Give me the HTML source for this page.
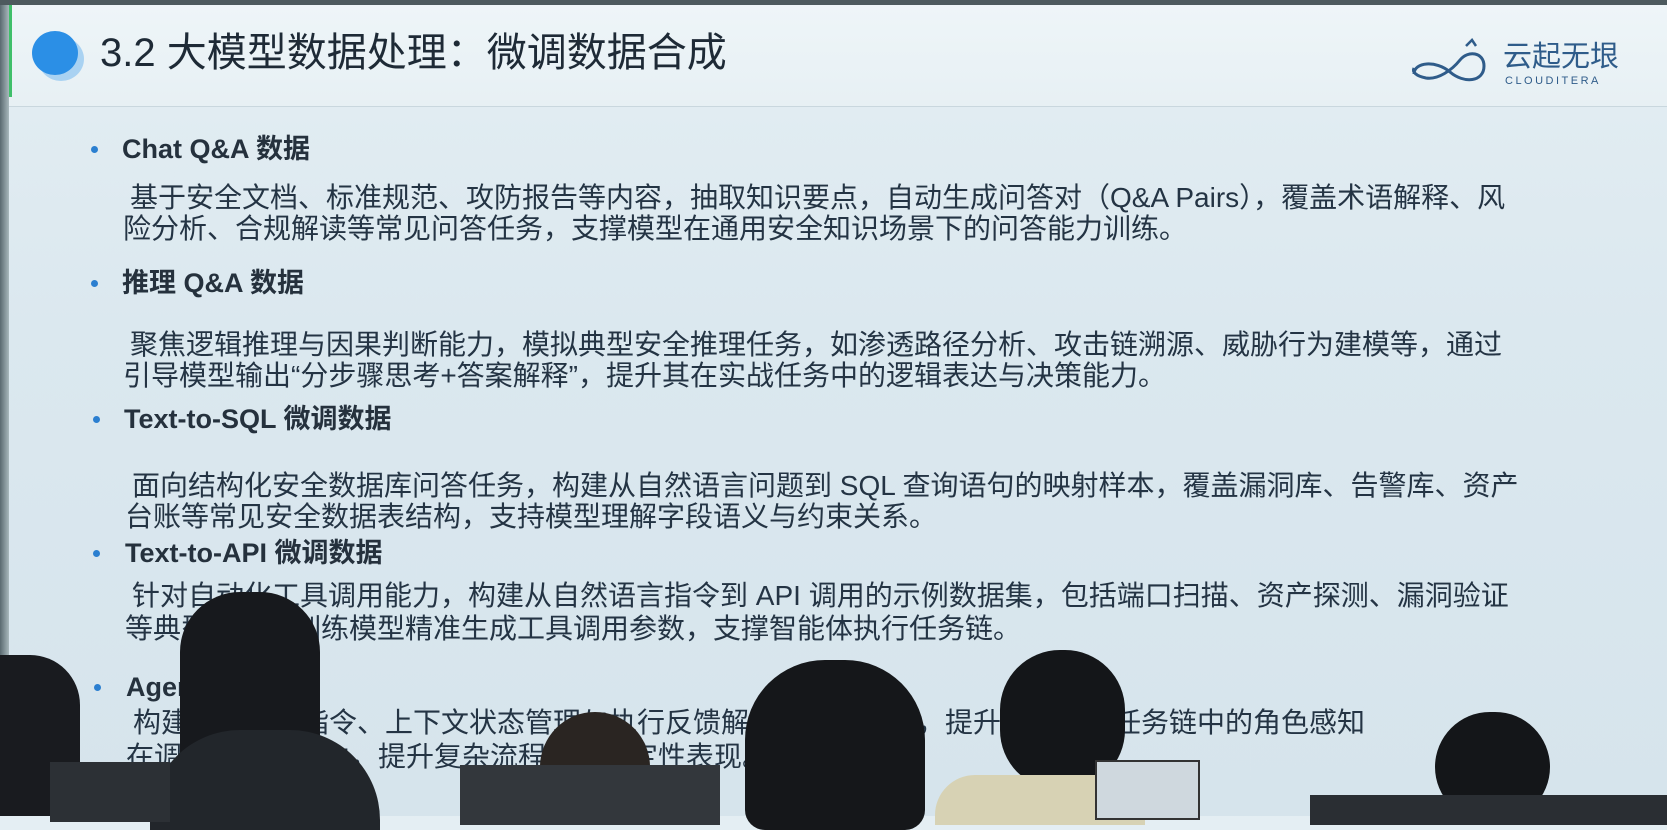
<!DOCTYPE html>
<html><head><meta charset="utf-8"><style>
*{margin:0;padding:0;box-sizing:border-box}
body{width:1667px;height:816px;overflow:hidden;position:relative;
background:linear-gradient(180deg,#e4eef3 0%,#dbe8ef 40%,#d6e4ec 100%);
font-family:"Liberation Sans","Noto Sans CJK SC",sans-serif;color:#243444}
.edge{position:absolute;left:0;top:0;width:9px;height:816px;background:linear-gradient(90deg,#5a6a70,#a8b8bc)}
.topb{position:absolute;left:0;top:0;width:1667px;height:5px;background:#4d5a5e}
.grn{position:absolute;left:9px;top:5px;width:3px;height:92px;background:#3fbf6a}
.head{position:absolute;left:9px;top:5px;width:1658px;height:102px;background:linear-gradient(180deg,#eef5f8,#e7f0f4);border-bottom:1px solid #c9d7de}
.dot{position:absolute;left:32px;top:31px;width:46px;height:44px;border-radius:50%;background:#2b8fe6;box-shadow:6px 6px 0 #a9d2f2}
.title{position:absolute;left:100px;top:30px;font-size:40px;line-height:46px;color:#1e2a36;white-space:nowrap}
.logo{position:absolute;left:1408px;top:32px}
.l{position:absolute;white-space:nowrap;font-size:28px;line-height:30px}
.h{font-size:27px;font-weight:bold;color:#25313d}
.b{position:absolute;width:7px;height:7px;border-radius:50%;background:#2b7fd0}
.p{position:absolute;background:#1c1f24}
</style></head><body>
<div class="head"></div>
<div class="edge"></div><div class="topb"></div><div class="grn"></div>
<div class="dot"></div>
<div class="title">3.2 大模型数据处理：微调数据合成</div>
<svg class="logo" width="215" height="60" viewBox="0 0 215 60">
<path d="M6 42 C6 30 28 28 42 40 C56 52 76 50 76 34 C76 20 60 18 52 28 C44 38 30 48 18 46 C8 44 4 40 6 36" fill="none" stroke="#2f5c8a" stroke-width="3"/>
<path d="M58 14 l6 -6 l4 6" fill="none" stroke="#2f5c8a" stroke-width="2.5"/>
<text x="95" y="34" font-size="29" fill="#2f5c8a" font-family="Noto Sans CJK SC,sans-serif">云起无垠</text>
<text x="97" y="52" font-size="11" fill="#2f5c8a" letter-spacing="2.5" font-family="Liberation Sans,sans-serif">CLOUDITERA</text>
</svg>

<div class="b" style="left:91px;top:146px"></div>
<div class="l h" style="left:122px;top:134px">Chat Q&amp;A 数据</div>
<div class="l" style="left:130px;top:183px">基于安全文档、标准规范、攻防报告等内容，抽取知识要点，自动生成问答对（Q&amp;A Pairs），覆盖术语解释、风</div>
<div class="l" style="left:123px;top:214px">险分析、合规解读等常见问答任务，支撑模型在通用安全知识场景下的问答能力训练。</div>

<div class="b" style="left:91px;top:280px"></div>
<div class="l h" style="left:122px;top:268px">推理 Q&amp;A 数据</div>
<div class="l" style="left:130px;top:330px">聚焦逻辑推理与因果判断能力，模拟典型安全推理任务，如渗透路径分析、攻击链溯源、威胁行为建模等，通过</div>
<div class="l" style="left:123px;top:361px">引导模型输出“分步骤思考+答案解释”，提升其在实战任务中的逻辑表达与决策能力。</div>

<div class="b" style="left:93px;top:416px"></div>
<div class="l h" style="left:124px;top:404px">Text-to-SQL 微调数据</div>
<div class="l" style="left:132px;top:471px">面向结构化安全数据库问答任务，构建从自然语言问题到 SQL 查询语句的映射样本，覆盖漏洞库、告警库、资产</div>
<div class="l" style="left:125px;top:502px">台账等常见安全数据表结构，支持模型理解字段语义与约束关系。</div>

<div class="b" style="left:93px;top:550px"></div>
<div class="l h" style="left:125px;top:538px">Text-to-API 微调数据</div>
<div class="l" style="left:132px;top:581px">针对自动化工具调用能力，构建从自然语言指令到 API 调用的示例数据集，包括端口扫描、资产探测、漏洞验证</div>
<div class="l" style="left:125px;top:614px">等典型场景，训练模型精准生成工具调用参数，支撑智能体执行任务链。</div>

<div class="b" style="left:94px;top:684px"></div>
<div class="l h" style="left:126px;top:672px">Agent 微调数据</div>
<div class="l" style="left:133px;top:708px">构建多步任务指令、上下文状态管理与执行反馈解析的交互样本，提升智能体在任务链中的角色感知</div>
<div class="l" style="left:126px;top:742px">在调度与协同能力，提升复杂流程中的稳定性表现。</div>

<!-- audience -->
<div class="p" style="left:180px;top:592px;width:140px;height:224px;border-radius:60px 60px 10px 10px;background:#17191d"></div>
<div class="p" style="left:150px;top:730px;width:230px;height:100px;border-radius:90px 90px 0 0;background:#22262b"></div>
<div class="p" style="left:0;top:655px;width:80px;height:161px;border-radius:0 50px 0 0;background:#191b1f"></div>
<div class="p" style="left:50px;top:762px;width:120px;height:60px;background:#2c3035"></div>
<div class="p" style="left:540px;top:712px;width:110px;height:110px;border-radius:50%;background:#2a2522"></div>
<div class="p" style="left:460px;top:765px;width:260px;height:60px;background:#33373c"></div>
<div class="p" style="left:745px;top:660px;width:180px;height:170px;border-radius:80px 80px 20px 20px;background:#15171a"></div>
<div class="p" style="left:1000px;top:650px;width:125px;height:140px;border-radius:60px;background:#141619"></div>
<div class="p" style="left:935px;top:775px;width:210px;height:50px;border-radius:40px 40px 0 0;background:#d7d2b4"></div>
<div class="p" style="left:1095px;top:760px;width:105px;height:60px;background:#cfd8de;border:2px solid #333"></div>
<div class="p" style="left:1435px;top:712px;width:115px;height:110px;border-radius:55px;background:#141619"></div>
<div class="p" style="left:1310px;top:795px;width:357px;height:30px;background:#2a2e33"></div>
</body></html>
